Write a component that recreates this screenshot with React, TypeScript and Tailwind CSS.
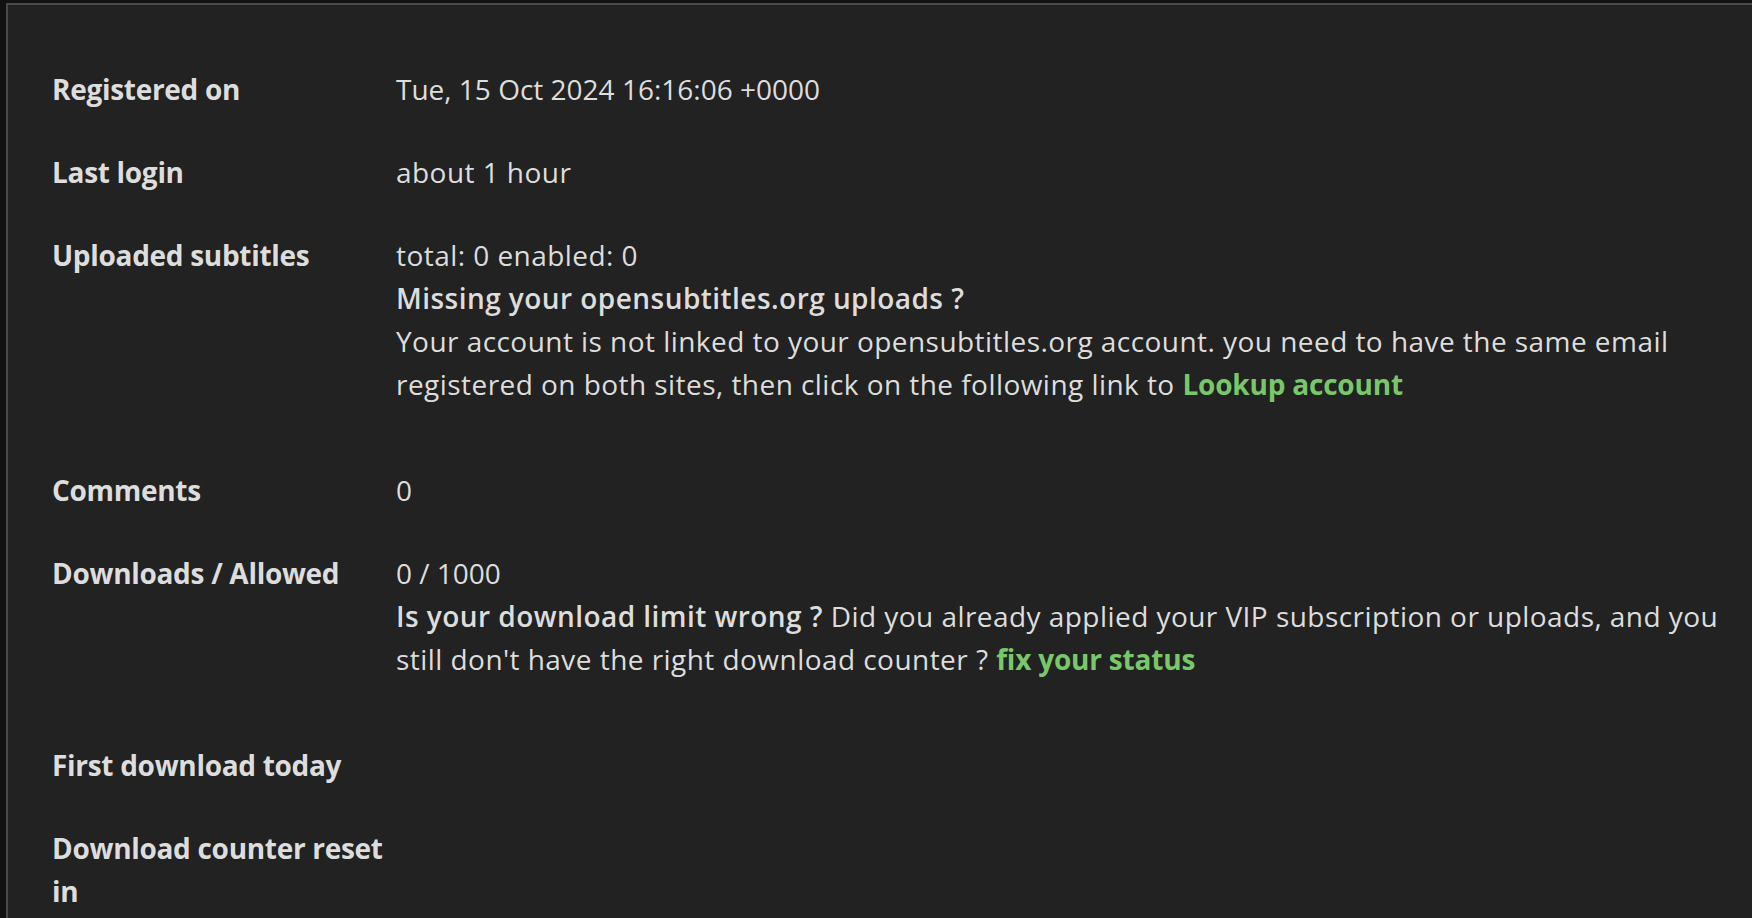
import React from 'react';

const font = { fontFamily: '"Open Sans", "Liberation Sans", sans-serif' };

const rows = [
  { label: 'Registered on', value: <div className="tracking-normal">Tue, 15 Oct 2024 16:16:06 +0000</div> },
  { label: 'Last login', value: <div>about 1 hour</div> },
  {
    label: 'Uploaded subtitles',
    value: (
      <div className="mb-[23px]">
        <div>total: 0 enabled: 0</div>
        <div className="font-semibold">Missing your opensubtitles.org uploads ?</div>
        <div>
          Your account is not linked to your opensubtitles.org account. you need to have the same email
          registered on both sites, then click on the following link to{' '}
          <a href="#" className="font-bold tracking-[-0.2px] text-[#78c86a]">Lookup account</a>
        </div>
      </div>
    ),
  },
  { label: 'Comments', value: <div>0</div> },
  {
    label: 'Downloads / Allowed',
    value: (
      <div className="mb-[23px]">
        <div className="tracking-normal">0 / 1000</div>
        <div>
          <span className="font-semibold">Is your download limit wrong ?</span> Did you already applied your VIP
          subscription or uploads, and you still don't have the right download counter ?{' '}
          <a href="#" className="font-bold tracking-[-0.2px] text-[#78c86a]">fix your status</a>
        </div>
      </div>
    ),
  },
  { label: 'First download today', value: <div></div> },
  { label: 'Download counter reset in', value: <div></div> },
];

export default function App() {
  return (
    <div className="min-h-screen bg-[#111] pl-[6px] pt-[3px] overflow-hidden" style={font}>
      <div className="min-h-[915px] bg-[#222] border-l-2 border-t-2 border-[#4a4a4a] pl-[44px] pt-[43px] text-[28px] leading-[43px] text-[#dddddd]">
        {rows.map((r) => (
          <div key={r.label} className="grid grid-cols-[344px_1fr] py-[20px]">
            <div className="font-bold tracking-[-0.3px] pr-[8px]">{r.label}</div>
            <div className="pr-[20px] tracking-[0.45px]">{r.value}</div>
          </div>
        ))}
      </div>
    </div>
  );
}
